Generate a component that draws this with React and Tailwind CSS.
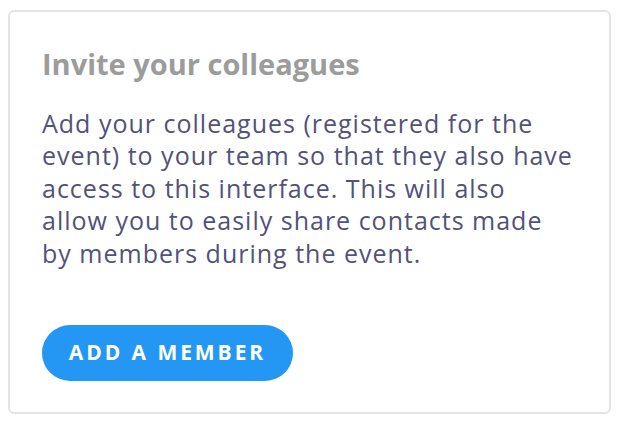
export default function App() {
  return (
    <div className="w-[620px] h-[424px] bg-white pt-[10px] pl-[8px]" style={{ fontFamily: '"Open Sans", "Noto Sans", sans-serif' }}>
      <div className="w-[603px] h-[404px] border-2 border-[#e4e4e4] rounded-[6px] px-[32px] pt-[34px]">
        <h2 className="text-[29px] leading-[36px] font-bold text-[#9c9c9c]">Invite your colleagues</h2>
        <p className="mt-[25px] w-[560px] text-[25px] leading-[32.4px] tracking-[0.04em] font-medium text-[#52527a]">
          Add your colleagues (registered for the<br />
          event) to your team so that they also have<br />
          access to this interface. This will also<br />
          allow you to easily share contacts made<br />
          by members during the event.
        </p>
        <button className="mt-[56px] h-[56px] w-[251px] rounded-full bg-[#2397f3] text-white text-[21px] font-bold tracking-[0.14em] uppercase">
          Add a member
        </button>
      </div>
    </div>
  )
}
